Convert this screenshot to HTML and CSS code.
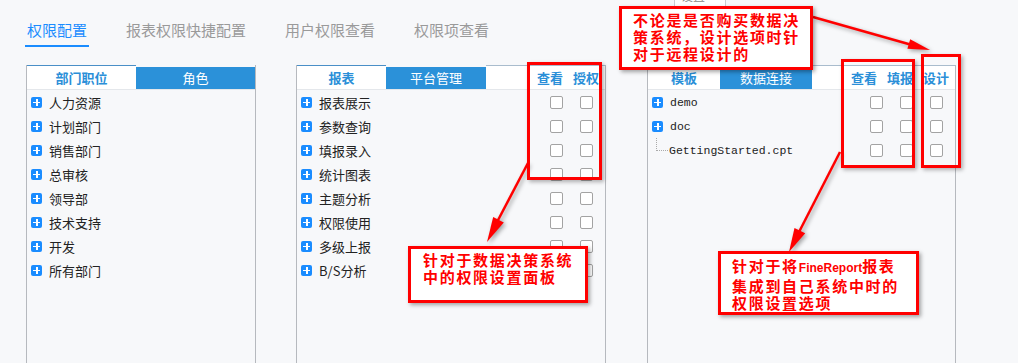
FILE: index.html
```html
<!DOCTYPE html>
<html lang="zh-CN">
  <head>
    <meta charset="UTF-8" />
    <title>权限配置</title>
    <link rel="stylesheet" href="styles.css">
  </head>
  <body>
    <nav class="perm-tabs">
      <span class="perm-tab active">权限配置</span>
      <span class="perm-tab">报表权限快捷配置</span>
      <span class="perm-tab">用户权限查看</span>
      <span class="perm-tab">权限项查看</span>
    </nav>

    <div class="panels">
      <div class="panel panel-dept">
        <div class="panel-head">
          <div class="head-tab on">部门职位</div>
          <div class="head-tab alt grow">角色</div>
        </div>
        <ul class="tree">
          <li class="node"><i class="plus"></i>人力资源</li>
          <li class="node"><i class="plus"></i>计划部门</li>
          <li class="node"><i class="plus"></i>销售部门</li>
          <li class="node"><i class="plus"></i>总审核</li>
          <li class="node"><i class="plus"></i>领导部</li>
          <li class="node"><i class="plus"></i>技术支持</li>
          <li class="node"><i class="plus"></i>开发</li>
          <li class="node"><i class="plus"></i>所有部门</li>
        </ul>
      </div>

      <div class="panel panel-report">
        <div class="panel-head">
          <div class="head-tab on">报表</div>
          <div class="head-tab alt">平台管理</div>
          <div class="head-rest"><span>查看</span><span>授权</span></div>
        </div>
        <ul class="tree">
          <li class="node"><i class="plus"></i>报表展示<span class="checks"><i class="box"></i><i class="box"></i></span></li>
          <li class="node"><i class="plus"></i>参数查询<span class="checks"><i class="box"></i><i class="box"></i></span></li>
          <li class="node"><i class="plus"></i>填报录入<span class="checks"><i class="box"></i><i class="box"></i></span></li>
          <li class="node"><i class="plus"></i>统计图表<span class="checks"><i class="box"></i><i class="box"></i></span></li>
          <li class="node"><i class="plus"></i>主题分析<span class="checks"><i class="box"></i><i class="box"></i></span></li>
          <li class="node"><i class="plus"></i>权限使用<span class="checks"><i class="box"></i><i class="box"></i></span></li>
          <li class="node"><i class="plus"></i>多级上报<span class="checks"><i class="box"></i><i class="box"></i></span></li>
          <li class="node"><i class="plus"></i>B/S分析<span class="checks"><i class="box"></i><i class="box"></i></span></li>
        </ul>
      </div>

      <div class="panel panel-tpl">
        <div class="panel-head">
          <div class="head-tab on">模板</div>
          <div class="head-tab alt">数据连接</div>
          <div class="head-rest"><span>查看</span><span>填报</span><span>设计</span></div>
        </div>
        <ul class="tree">
          <li class="node"><i class="plus"></i><span class="mono">demo</span><span class="checks"><i class="box"></i><i class="box"></i><i class="box"></i></span></li>
          <li class="node"><i class="plus"></i><span class="mono">doc</span><span class="checks"><i class="box"></i><i class="box"></i><i class="box"></i></span></li>
          <li class="node"><i class="branch"></i><span class="mono">GettingStarted.cpt</span><span class="checks"><i class="box"></i><i class="box"></i><i class="box"></i></span></li>
        </ul>
      </div>
    </div>

    <div class="stray-menu">设置</div>

    <!-- annotation arrows -->
    <svg class="arrows" width="1018" height="363" viewBox="0 0 1018 363">
      <g stroke="#f00" stroke-width="2.5" fill="none">
        <line x1="813" y1="17" x2="912" y2="45" />
        <line x1="528" y1="163" x2="496" y2="224" />
        <line x1="840" y1="152" x2="798" y2="234" />
      </g>
      <g fill="#f00">
        <polygon points="930,50 907.4,48.8 910.2,39.2" />
        <polygon points="487,242 503.8,222.6 493.2,217" />
        <polygon points="789,252 805.2,233.3 794.5,227.9" />
      </g>
    </svg>

    <div class="frame frame-report"></div>
    <div class="frame frame-tpl"></div>
    <div class="frame frame-design"></div>

    <div class="note note-top">不论是是否购买数据决<br>策系统，设计选项时针<br>对于远程设计的</div>
    <div class="note note-mid">针对于数据决策系统<br>中的权限设置面板</div>
    <div class="note note-right">针对于将<span class="latin">FineReport</span>报表<br>集成到自己系统中时的<br>权限设置选项</div>
  </body>
</html>
```

FILE: styles.css
```css
* {
  box-sizing: border-box;
}
body {
  margin: 0;
  height: 363px;
  overflow: hidden;
  position: relative;
  background: #f7f8fa;
  font-family: "Noto Sans CJK SC", sans-serif;
  color: #222;
}
.perm-tabs {
  display: flex;
  gap: 35px;
  padding: 20px 0 0 25px;
}
.perm-tab {
  padding: 0 2px 5px;
  font-size: 15px;
  line-height: 20px;
  color: #9a9a9a;
  border-bottom: 2px solid transparent;
}
.perm-tab.active {
  color: #1a8cff;
  border-bottom-color: #1a8cff;
}
.panels {
  display: flex;
  margin-top: 18px;
  padding-left: 26px;
  height: 300px;
}
.panel {
  border-left: 1px solid #b6b9be;
  border-right: 1px solid #b6b9be;
}
.panel-dept {
  width: 230px;
}
.panel-report {
  width: 310px;
  margin-left: 40px;
}
.panel-tpl {
  width: 309px;
  margin-left: 41px;
}
.panel-head {
  display: flex;
  height: 25px;
  border-bottom: 1px solid #e4e7eb;
  font-size: 13px;
}
.head-tab {
  text-align: center;
}
.head-tab.on {
  background: #fff;
  border-top: 1px solid #4a8fc7;
  color: #2b8fd8;
  font-weight: bold;
  line-height: 23px;
}
.head-tab.alt {
  margin-top: 2px;
  background: #2b91d9;
  color: #fff;
  line-height: 22px;
}
.head-tab.grow {
  flex: 1;
}
.panel-dept .head-tab.on {
  width: 109px;
}
.panel-report .head-tab.on {
  width: 89px;
}
.panel-report .head-tab.alt {
  width: 100px;
}
.panel-tpl .head-tab.on {
  width: 72px;
}
.panel-tpl .head-tab.alt {
  width: 92px;
}
.head-rest {
  flex: 1;
  display: flex;
  justify-content: flex-end;
  gap: 10px;
  padding-right: 6px;
  background: #fff;
  border-top: 1px solid #a9bccd;
  color: #2b8fd8;
  font-weight: bold;
  line-height: 23px;
}
.tree {
  list-style: none;
  margin: 0;
  padding: 0;
}
.node {
  display: flex;
  align-items: center;
  height: 24px;
  padding-left: 4px;
  font-size: 13px;
}
.plus {
  position: relative;
  width: 11px;
  height: 11px;
  margin-right: 7px;
  border-radius: 2px;
  background: #1a8cff;
}
.plus::before,
.plus::after {
  content: "";
  position: absolute;
  background: #fff;
}
.plus::before {
  left: 2px;
  top: 5px;
  width: 7px;
  height: 1.5px;
}
.plus::after {
  left: 5px;
  top: 2px;
  width: 1.5px;
  height: 7px;
}
.branch {
  align-self: flex-start;
  width: 12px;
  height: 13px;
  margin-left: 4px;
  margin-right: 1px;
  border-left: 1px dotted #aaa;
  border-bottom: 1px dotted #aaa;
}
.mono {
  font-family: "Liberation Mono", monospace;
  font-size: 11.5px;
}
.checks {
  margin-left: auto;
  display: flex;
  gap: 17px;
  padding-right: 12px;
}
.box {
  width: 13px;
  height: 13px;
  border: 1px solid #a3a3a3;
  border-radius: 2px;
  background: #fff;
}
.stray-menu {
  position: absolute;
  left: 674px;
  top: -12px;
  width: 52px;
  height: 20px;
  padding-left: 6px;
  border: 1px solid #c9ccd1;
  border-top: none;
  background: #fff;
  font-size: 12px;
  line-height: 16px;
  color: #888;
}
.arrows {
  position: absolute;
  left: 0;
  top: 0;
  filter: drop-shadow(2px 2px 2px rgba(0, 0, 0, 0.35));
}
.frame {
  position: absolute;
  border: 3px solid #f00;
  box-shadow: 2px 2px 4px rgba(0, 0, 0, 0.3);
}
.frame-report {
  left: 527px;
  top: 62px;
  width: 75px;
  height: 118px;
}
.frame-tpl {
  left: 841px;
  top: 59px;
  width: 74px;
  height: 109px;
}
.frame-design {
  left: 921px;
  top: 54px;
  width: 40px;
  height: 114px;
}
.note {
  position: absolute;
  border: 3px solid #f00;
  background: #fff;
  color: #f00;
  font-size: 15px;
  font-weight: bold;
  line-height: 17px;
  letter-spacing: 1.7px;
  white-space: nowrap;
  box-shadow: 2px 2px 4px rgba(0, 0, 0, 0.35);
}
.note-top {
  left: 619px;
  top: 6px;
  width: 194px;
  height: 64px;
  padding: 2px 0 0 11px;
}
.note-mid {
  left: 408px;
  top: 246px;
  width: 180px;
  height: 57px;
  padding: 2px 0 0 12px;
}
.note-right {
  left: 718px;
  top: 251px;
  width: 201px;
  height: 64px;
  padding: 3px 0 0 11px;
}
.latin {
  font-family: "Liberation Sans", sans-serif;
  font-size: 12px;
  letter-spacing: 0;
}
```
